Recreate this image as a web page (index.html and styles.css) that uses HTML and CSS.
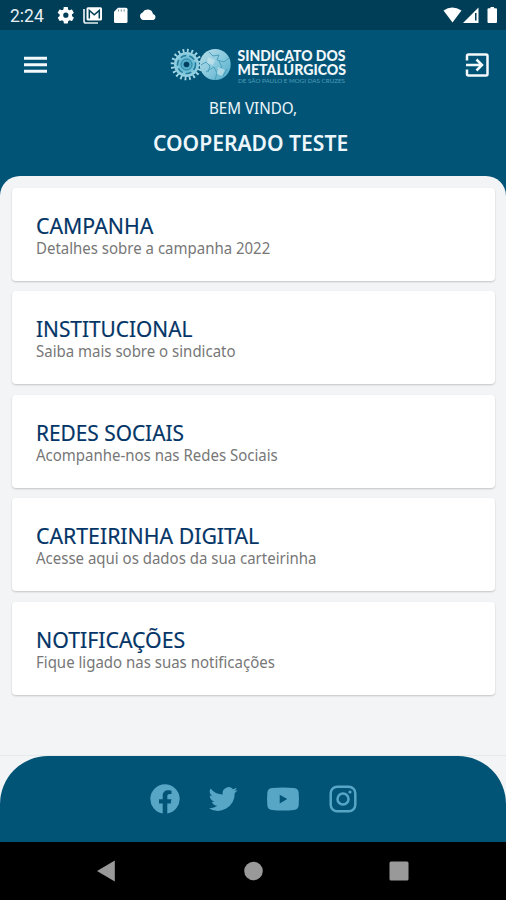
FILE: index.html
```html
<!DOCTYPE html>
<html lang="pt-BR">
<head>
<meta charset="utf-8">
<title>Sindicato dos Metalúrgicos</title>
<link rel="stylesheet" href="styles.css">
</head>
<body>
<div class="status">
  <span class="time">2:24</span>
  <svg class="status-left" width="102" height="20" viewBox="0 0 102 20" fill="#fff">
    <g transform="translate(-1 -.6) scale(.82)"><path d="M19.4 13c.1-.3.1-.7.1-1s0-.7-.1-1l2.1-1.700c.2-.1.2-.4.1-.6l-2-3.500c-.1-.2-.4-.3-.6-.2l-2.500 1c-.5-.4-1.100-.7-1.700-1l-.4-2.600c0-.2-.2-.4-.5-.4h-4c-.2 0-.4.200-.5.400l-.4 2.600c-.6.300-1.200.600-1.700 1l-2.500-1c-.2-.1-.5 0-.6.200l-2 3.500c-.1.200-.1.500.1.600L4.500 11a8 8 0 0 0 0 2l-2.100 1.700c-.2.100-.2.400-.1.600l2 3.500c.1.200.4.300.6.200l2.500-1c.5.400 1.100.7 1.700 1l.4 2.600c0 .2.200.4.500.4h4c.2 0 .4-.2.500-.4l.4-2.600c.6-.3 1.200-.6 1.700-1l2.500 1c.2.100.5 0 .6-.2l2-3.500c.1-.2.1-.5-.1-.6zM12 15.200a3.200 3.200 0 1 1 0-6.400 3.200 3.200 0 0 1 0 6.400z"/></g>
    <path d="M27 3v12a2 2 0 0 0 2 2h12" fill="none" stroke="#e4edf0" stroke-width="1.700"/>
    <rect x="29.500" y="1.200" width="15.500" height="13.200" rx="1.500"/>
    <path d="M32.300 12.500V4.500L37.300 8.800L42.300 4.500V12.500" fill="none" stroke="#003d56" stroke-width="1.500"/>
    <path d="M61 1.700h8a1.500 1.500 0 0 1 1.500 1.500v12.300a1.500 1.500 0 0 1-1.500 1.500H58.500a1.500 1.500 0 0 1-1.500-1.500V5.700z"/>
    <path d="M61.500 3.500v2M64.300 3.500v2M67.200 3.500v2" stroke="#6e8d99" stroke-width="1.100"/>
    <path d="M86 14a4 4 0 0 1-.4-7.600 5.600 5.600 0 0 1 10.400 1.500 3.200 3.200 0 0 1 .5 6.100z"/>
  </svg>
  <svg class="status-right" width="58" height="20" viewBox="0 0 58 20" fill="#fff">
    <path d="M2.500 4.500Q11-1.500 20.500 4.500L11.500 16.500z"/>
    <path d="M22 17L37.500 1.500V17z"/><path d="M34 7h1.500v7.500h-1.500z" fill="#003d56"/>
    <path d="M47.500 2.300h2V1h3.500v1.300h2q1 0 1 1V16q0 1-1 1h-7.500q-1 0-1-1V3.300q0-1 1-1z"/>
  </svg>
</div>
<header class="header">
  <div class="bar">
    <svg class="menu" width="23" height="18" viewBox="0 0 23 18"><path d="M0 2.300h23M0 8.800h23M0 15.200h23" stroke="#f3f8fb" stroke-width="3"/></svg>
    <svg class="logo" width="180" height="40" viewBox="0 0 180 40">
      <defs>
        <radialGradient id="gear"><stop offset="0" stop-color="#3896b7"/><stop offset=".5" stop-color="#67bbd3"/><stop offset="1" stop-color="#9bd4e4"/></radialGradient>
        <linearGradient id="globe" x2="1" y2="1"><stop offset="0" stop-color="#b9dce7"/><stop offset=".5" stop-color="#8acade"/><stop offset="1" stop-color="#4ba9c7"/></linearGradient>
      </defs>
      <circle cx="16.500" cy="19.500" r="14" fill="none" stroke="#a5d8e6" stroke-width="3.600" stroke-dasharray="1.800 2.598"/>
      <circle cx="16.500" cy="19.500" r="12.500" fill="url(#gear)"/>
      <circle cx="16.500" cy="19.500" r="9" fill="none" stroke="#247b9b" stroke-width="1.600" stroke-dasharray="6 3"/>
      <circle cx="16.500" cy="19.500" r="5.500" fill="none" stroke="#257f9f" stroke-width="1"/>
      <circle cx="16.500" cy="19.500" r="2.800" fill="#02405f"/>
      <circle cx="45.200" cy="19.500" r="15.500" fill="url(#globe)"/>
      <path d="M31 20l5-3 4 4-2 6M39 7l4 4 6-1-2 5 7 2 5-4M36 27l8-5 3 6-2 7M49 16l3 6-5 3M53 31l4-7" fill="none" stroke="#4a9fbb" stroke-width="1"/>
      <path d="M38 12l7 3-2 5-6-2zM48 22l7 3-3 6-5-2z" fill="#c7e5ed" opacity=".7"/>
      <g class="logo-name"><text x="67.500" y="15.700" textLength="108" lengthAdjust="spacingAndGlyphs">SINDICATO DOS</text><text x="67.500" y="29.500" textLength="108.500" lengthAdjust="spacingAndGlyphs">METALÚRGICOS</text></g>
      <text class="logo-place" x="68" y="37.500" textLength="107" lengthAdjust="spacingAndGlyphs">DE SÃO PAULO E MOGI DAS CRUZES</text>
    </svg>
    <svg class="exit" width="24" height="24" viewBox="0 0 24 24" fill="none" stroke="#f5f9fc" stroke-width="2.500"><path d="M2 7.500V3q0-1.500 1.500-1.500h17.500q1.500 0 1.500 1.500v18q0 1.500-1.500 1.500H3.500Q2 22.500 2 21v-4.500M1 12h15.500M11.500 6.500l5.500 5.500-5.500 5.500"/></svg>
  </div>
  <p class="welcome"><span>BEM VINDO,</span></p>
  <h1 class="user"><span>COOPERADO TESTE</span></h1>
</header>
<main class="main">
  <section class="card campaign"><h2><span>CAMPANHA</span></h2><p><span>Detalhes sobre a campanha 2022</span></p></section>
  <section class="card institutional"><h2><span>INSTITUCIONAL</span></h2><p><span>Saiba mais sobre o sindicato</span></p></section>
  <section class="card social"><h2><span>REDES SOCIAIS</span></h2><p><span>Acompanhe-nos nas Redes Sociais</span></p></section>
  <section class="card wallet"><h2><span>CARTEIRINHA DIGITAL</span></h2><p><span>Acesse aqui os dados da sua carteirinha</span></p></section>
  <section class="card notices"><h2><span>NOTIFICAÇÕES</span></h2><p><span>Fique ligado nas suas notificações</span></p></section>
</main>
<div class="footer-wrap"><footer class="footer">
  <svg width="30" height="30" viewBox="0 0 30 30" fill="#57a6c6"><path d="M15 .2a14.800 14.800 0 0 0-2.300 29.400V19.400H9v-4.200h3.700v-3.300c0-3.700 2.200-5.700 5.500-5.700 1.600 0 3.300.3 3.300.3v3.600h-1.900c-1.800 0-2.300 1.100-2.300 2.300v2.800h4.100l-.7 4.200h-3.400v10.200A14.800 14.800 0 0 0 15 .2z"/></svg>
  <svg width="30" height="30" viewBox="0 0 24 24" fill="#57a6c6"><path d="M23.600 4.800c-.9.400-1.800.6-2.700.8 1-.6 1.700-1.500 2.100-2.600-.9.500-1.900.9-3 1.100a4.800 4.800 0 0 0-8.200 4.300A13.500 13.500 0 0 1 2 3.500a4.800 4.800 0 0 0 1.500 6.300c-.8 0-1.500-.2-2.100-.6v.1c0 2.300 1.600 4.200 3.800 4.700-.7.200-1.400.2-2.100.1.600 1.900 2.300 3.200 4.400 3.300A9.500 9.500 0 0 1 .6 19.300 13.500 13.500 0 0 0 21.300 7.300c.9-.7 1.700-1.500 2.300-2.500z"/></svg>
  <svg width="34" height="30" viewBox="0 0 34 30" fill="#57a6c6"><path fill-rule="evenodd" d="M6 4.100Q17 3 28 4.100q4.500.4 4.700 4.900.5 6 0 12-.2 4.500-4.700 4.900-11 1.100-22 0Q1.500 25.500 1.300 21q-.5-6 0-12Q1.500 4.500 6 4.100zM13.700 10.800v8.600l7.500-4.300z"/></svg>
  <svg width="30" height="30" viewBox="0 0 30 30" fill="none" stroke="#57a6c6" stroke-width="2.500"><rect x="2.700" y="2.700" width="24.600" height="24.600" rx="6.500"/><circle cx="15" cy="15" r="5.500"/><circle cx="22" cy="8" r="1.600" fill="#57a6c6" stroke="none"/></svg>
</footer></div>
<nav class="nav">
  <svg width="20" height="24" viewBox="0 0 20 24"><path d="M0 12L17.800 1.500v21z" fill="#999"/></svg>
  <svg width="20" height="24" viewBox="0 0 20 24"><circle cx="10.500" cy="12" r="9.300" fill="#999"/></svg>
  <svg width="20" height="24" viewBox="0 0 20 24"><rect x=".5" y="2.500" width="19" height="19" rx="1.500" fill="#999"/></svg>
</nav>
</body>
</html>
```
FILE: styles.css
```css
* { box-sizing: border-box; }
body { margin: 0; width: 506px; height: 900px; display: flex; flex-direction: column; overflow: hidden; background: #025477; font-family: "Noto Sans", sans-serif; }
h1, h2, p { margin: 0; font-weight: 400; white-space: nowrap; }
svg { display: block; flex: none; }
.status { height: 30px; background: #003e57; display: flex; align-items: flex-start; padding: 6px 7px 0 10px; }
.time { width: 47px; color: #e9f0f3; font: 400 17.500px/20px Roboto, sans-serif; }
.status-right { margin-left: auto; }
.header { height: 146px; color: #edf6fb; text-align: center; }
.bar { height: 66px; padding: 0 17px 0 24px; display: flex; align-items: center; }
.logo { margin: 4px auto 0 123px; }
.menu, .exit { margin-top: 3px; }
.logo-name { font: 900 14.500px Lato, sans-serif; fill: #eff7fa; }
.logo-place { font: 5.500px Lato, sans-serif; fill: #4d9eb9; }
.welcome { font-size: 15.500px; line-height: 24px; }
.user { font-size: 21.500px; line-height: 30px; margin-top: 8px; padding-right: 4px; font-weight: 600; }
.welcome span, .user span, .card span { display: inline-block; transform-origin: left; transform: scaleX(.967); }
.welcome span, .user span { transform-origin: center; transform: scaleX(.98); }
.main { height: 579px; background: #f3f4f6; border-radius: 20px 20px 0 0; padding: 12px 11px 0 12px; display: flex; flex-direction: column; gap: 10.400px; }
.card { height: 93px; flex: none; background: #fff; border-radius: 4px; padding: 23px 24px; box-shadow: 0 1px 2px #0003; }
.card h2 { color: #033567; font-size: 22px; line-height: 28px; -webkit-text-stroke: .2px #033567; }
.card p { color: #777; font-size: 15.500px; line-height: 18px; }
.institutional h2 span, .social h2 span { transform: scaleX(.947); }
.footer-wrap { height: 87px; background: #f3f4f6; border-top: 1px solid #e7e9eb; }
.footer { height: 86px; padding-left: 2px; background: #025477; border-radius: 48px 48px 0 0; display: flex; align-items: center; justify-content: center; gap: 28px; }
.nav { height: 58px; background: #000; display: flex; align-items: center; justify-content: center; gap: 126px; }
```
